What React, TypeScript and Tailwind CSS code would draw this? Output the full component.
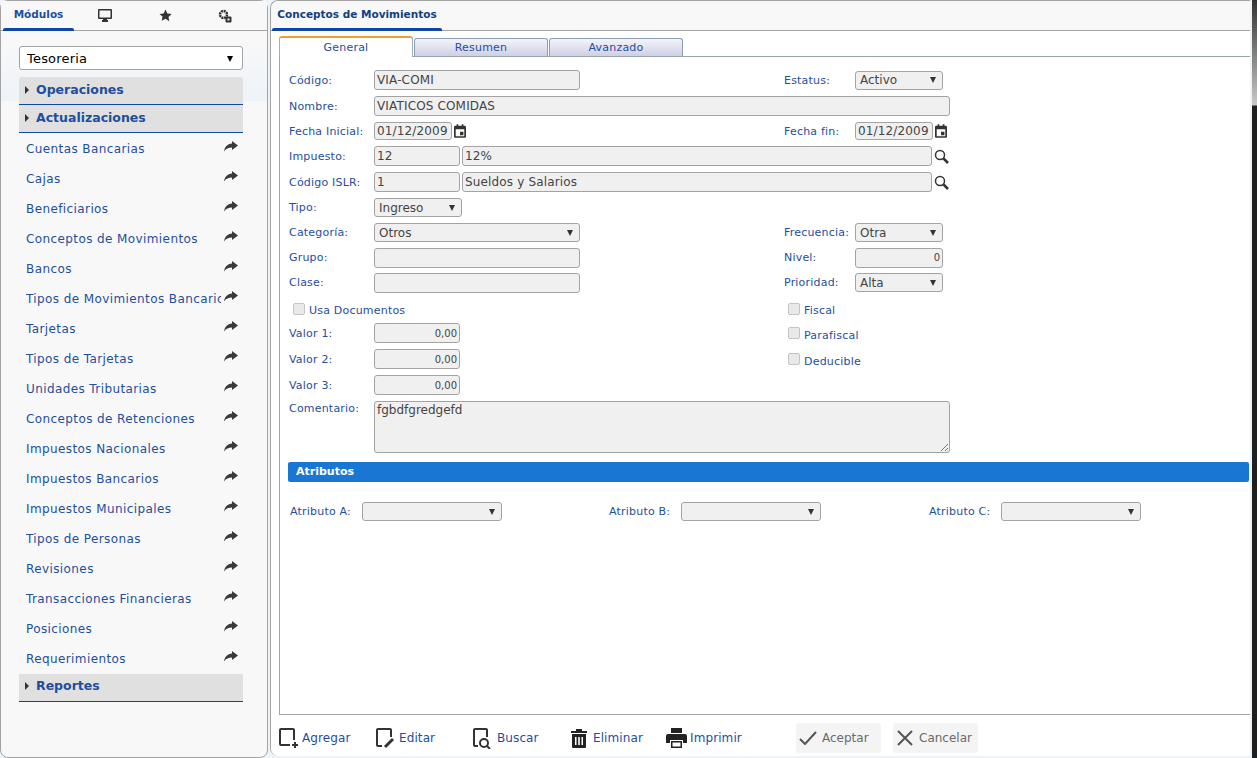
import type { ReactNode } from "react"

const labelColor = "text-[#1f4e9c]"

const menuItems = [
  "Cuentas Bancarias",
  "Cajas",
  "Beneficiarios",
  "Conceptos de Movimientos",
  "Bancos",
  "Tipos de Movimientos Bancarios",
  "Tarjetas",
  "Tipos de Tarjetas",
  "Unidades Tributarias",
  "Conceptos de Retenciones",
  "Impuestos Nacionales",
  "Impuestos Bancarios",
  "Impuestos Municipales",
  "Tipos de Personas",
  "Revisiones",
  "Transacciones Financieras",
  "Posiciones",
  "Requerimientos",
]

function ShareIcon() {
  return (
    <svg width="14" height="11" viewBox="0 0 14 11" className="shrink-0 fill-[#3a3a3a]">
      <path d="M8 0l6 4.500-6 4.500V6.500C4.500 6.500 2 7.500 0 10.500c.5-4.500 3.500-7.500 8-8z" />
    </svg>
  )
}

function CalendarIcon() {
  return (
    <svg width="12" height="14" viewBox="0 0 14 16" className="shrink-0 fill-[#333]">
      <path d="M3 0h2v2h4V0h2v2h1.500C13.300 2 14 2.700 14 3.500v11c0 .8-.7 1.500-1.500 1.500h-11C.7 16 0 15.300 0 14.500v-11C0 2.700.7 2 1.500 2H3zM2 6v8h10V6zm5 3h4v4H7z" />
    </svg>
  )
}

function SearchIcon() {
  return (
    <svg width="15" height="15" viewBox="0 0 15 15" fill="none" className="shrink-0 stroke-[#333]">
      <circle cx="6" cy="6" r="4.500" strokeWidth="1.500" />
      <path d="M9.500 9.500L14 14" strokeWidth="2.500" />
    </svg>
  )
}

function Caret({ className = "border-t-[#333]" }: { className?: string }) {
  return <span className={`h-0 w-0 border-x-[3.500px] border-t-[6px] border-x-transparent ${className}`} />
}

function RowCaret() {
  return <span className="h-0 w-0 border-y-[4px] border-l-[4px] border-y-transparent border-l-[#333]" />
}

function Field({ w, children, right, h = "h-[20px]" }: { w: string; children?: ReactNode; right?: boolean; h?: string }) {
  return (
    <div
      className={`${w} ${h} flex shrink-0 items-center overflow-hidden whitespace-nowrap rounded-[3px] border border-[#a3a3a3] bg-[#f0f0f0] px-[2px] text-[#444] ${right ? "justify-end text-[10px]" : "text-[12px] tracking-[0.15px]"}`}
    >
      {children}
    </div>
  )
}

function Select({ w, value }: { w: string; value?: string }) {
  return (
    <div className={`${w} flex h-[19px] shrink-0 items-center justify-between rounded-[3px] border border-[#a3a3a3] bg-[#f0f0f0] pl-[4px] pr-[6px] text-[12px] text-[#444]`}>
      <span>{value}</span>
      <Caret />
    </div>
  )
}

function Label({ children, w = "w-[85px]" }: { children: ReactNode; w?: string }) {
  return <div className={`${w} mt-[2px] shrink-0 whitespace-nowrap text-[11px] tracking-[0.2px] ${labelColor}`}>{children}</div>
}

function Row({ children, className = "" }: { children: ReactNode; className?: string }) {
  return <div className={`flex items-center ${className}`}>{children}</div>
}

function LeftCol({ children, className = "" }: { children?: ReactNode; className?: string }) {
  return <div className={`flex w-[495px] shrink-0 items-center ${className}`}>{children}</div>
}

function Check({ label }: { label: string }) {
  return (
    <div className="flex items-center">
      <span className="mb-[4px] h-[12px] w-[12px] rounded-[2px] border border-[#c4c4c4] bg-[#e9e9e9]" />
      <span className={`ml-[4px] mt-[2px] text-[11px] tracking-[0.2px] ${labelColor}`}>{label}</span>
    </div>
  )
}

function Sidebar() {
  return (
    <aside className="flex w-[268px] shrink-0 flex-col rounded-[8px] border border-[#a3a3a3] bg-[linear-gradient(#f8f8f8_40px,#eef3f8_100px,#f8f8f8_100px)]">
      <div className="flex h-[30px] border-b border-[#a3a3a3] bg-[#f8f8f8]">
        <div className="relative ml-[2px] flex w-[71px] items-center justify-center pb-[2px] text-[10.500px] font-bold text-[#1f4e9c]">
          Módulos
          <span className="absolute bottom-[-1px] left-0 h-[3px] w-full rounded-t-[2px] bg-[#0d47a1]" />
        </div>
        <div className="flex w-[61px] items-center justify-center">
          <svg width="14" height="13" viewBox="0 0 14 13" className="fill-[#333]">
            <path d="M1 0h12a1 1 0 011 1v8a1 1 0 01-1 1H9v1h1v2H4v-2h1v-1H1a1 1 0 01-1-1V1a1 1 0 011-1zm.500 1.500v7h11v-7z" />
          </svg>
        </div>
        <div className="flex w-[60px] items-center justify-center">
          <svg width="13" height="13" viewBox="0 0 24 24" className="fill-[#333]">
            <path d="M12 1l3.400 7.300 7.900 1-5.800 5.400 1.500 7.900L12 17.800l-7 3.800 1.500-7.900L.7 9.300l7.900-1z" />
          </svg>
        </div>
        <div className="flex w-[60px] items-center justify-center">
          <svg width="14" height="14" viewBox="0 0 14 14" className="fill-[#333]">
            <circle cx="5.500" cy="5.500" r="3.500" fill="none" stroke="#333" strokeWidth="2.500" strokeDasharray="2 .7" />
            <rect x="7.500" y="7.500" width="6" height="6" rx="1" />
            <rect x="9.500" y="9.500" width="2" height="2" fill="#f8f8f8" />
          </svg>
        </div>
      </div>
      <div className="ml-[18px] mr-[24px] mt-[15px] flex flex-col">
        <div className="flex h-[24px] items-center justify-between rounded-[3px] border border-[#a3a3a3] bg-white pl-[7px] pr-[9px] pt-[1px] text-[13px] tracking-[0.2px] text-black">
          <span>Tesoreria</span>
          <Caret className="border-t-black" />
        </div>
        <div className="mt-[7px] flex h-[28px] items-center rounded-t-[3px] border-b border-[#0d47a1] bg-[#e0e0e0] pb-[1px] pl-[6px]">
          <RowCaret />
          <span className="ml-[7px] text-[12.500px] font-bold text-[#1f4e9c]">Operaciones</span>
        </div>
        <div className="flex h-[28px] items-center border-b border-[#0d47a1] bg-[#e0e0e0] pb-[1px] pl-[6px]">
          <RowCaret />
          <span className="ml-[7px] text-[12.500px] font-bold text-[#1f4e9c]">Actualizaciones</span>
        </div>
        <div className="pt-[1px]">
          {menuItems.map((item) => (
            <div key={item} className="flex h-[30px] items-center pl-[7px] pr-[5px]">
              <span className={`min-w-0 flex-1 overflow-hidden whitespace-nowrap text-[12px] tracking-[0.4px] ${labelColor}`}>{item}</span>
              <span className="mb-[5px] ml-[3px]"><ShareIcon /></span>
            </div>
          ))}
        </div>
        <div className="flex h-[28px] items-center border-b border-[#0d47a1] bg-[#e0e0e0] pb-[3px] pl-[6px]">
          <RowCaret />
          <span className="ml-[7px] text-[12.500px] font-bold text-[#1f4e9c]">Reportes</span>
        </div>
      </div>
    </aside>
  )
}

function Form() {
  return (
    <div className="flex flex-col pl-[9px] pt-[10px]">
      <Row className="h-[26px]">
        <LeftCol>
          <Label>Código:</Label>
          <Field w="w-[206px]">VIA-COMI</Field>
        </LeftCol>
        <Label w="w-[71px]">Estatus:</Label>
        <Select w="w-[88px]" value="Activo" />
      </Row>
      <Row className="h-[26px]">
        <Label>Nombre:</Label>
        <Field w="w-[576px]">VIATICOS COMIDAS</Field>
      </Row>
      <Row className="h-[24px]">
        <LeftCol>
          <Label>Fecha Inicial:</Label>
          <Field w="w-[78px]" h="h-[18px]">01/12/2009</Field>
          <span className="ml-[2px]"><CalendarIcon /></span>
        </LeftCol>
        <Label w="w-[71px]">Fecha fin:</Label>
        <Field w="w-[78px]" h="h-[18px]">01/12/2009</Field>
        <span className="ml-[2px]"><CalendarIcon /></span>
      </Row>
      <Row className="h-[26px]">
        <Label>Impuesto:</Label>
        <Field w="w-[86px]">12</Field>
        <div className="ml-[2px]"><Field w="w-[470px]">12%</Field></div>
        <span className="ml-[2px]"><SearchIcon /></span>
      </Row>
      <Row className="h-[26px]">
        <Label>Código ISLR:</Label>
        <Field w="w-[86px]">1</Field>
        <div className="ml-[2px]"><Field w="w-[470px]">Sueldos y Salarios</Field></div>
        <span className="ml-[2px]"><SearchIcon /></span>
      </Row>
      <Row className="h-[25px]">
        <Label>Tipo:</Label>
        <Select w="w-[88px]" value="Ingreso" />
      </Row>
      <Row className="h-[25px]">
        <LeftCol>
          <Label>Categoría:</Label>
          <Select w="w-[206px]" value="Otros" />
        </LeftCol>
        <Label w="w-[71px]">Frecuencia:</Label>
        <Select w="w-[88px]" value="Otra" />
      </Row>
      <Row className="h-[25px]">
        <LeftCol>
          <Label>Grupo:</Label>
          <Field w="w-[206px]" />
        </LeftCol>
        <Label w="w-[71px]">Nivel:</Label>
        <Field w="w-[88px]" right>0</Field>
      </Row>
      <Row className="h-[25px]">
        <LeftCol>
          <Label>Clase:</Label>
          <Field w="w-[206px]" />
        </LeftCol>
        <Label w="w-[71px]">Prioridad:</Label>
        <Select w="w-[88px]" value="Alta" />
      </Row>
      <Row className="h-[25px] pt-[6px]">
        <LeftCol className="pl-[4px]">
          <Check label="Usa Documentos" />
        </LeftCol>
        <div className="pl-[4px]"><Check label="Fiscal" /></div>
      </Row>
      <Row className="h-[26px]">
        <LeftCol>
          <Label>Valor 1:</Label>
          <Field w="w-[86px]" right>0,00</Field>
        </LeftCol>
        <div className="pl-[4px] pt-[4px]"><Check label="Parafiscal" /></div>
      </Row>
      <Row className="h-[26px]">
        <LeftCol>
          <Label>Valor 2:</Label>
          <Field w="w-[86px]" right>0,00</Field>
        </LeftCol>
        <div className="pl-[4px] pt-[4px]"><Check label="Deducible" /></div>
      </Row>
      <Row className="h-[26px]">
        <Label>Valor 3:</Label>
        <Field w="w-[86px]" right>0,00</Field>
      </Row>
      <div className="mt-[3px] flex h-[52px] items-start">
        <div className="-mt-[2px]"><Label>Comentario:</Label></div>
        <div className="relative h-[52px] w-[576px] rounded-[3px] border border-[#a3a3a3] bg-[#f0f0f0] px-[2px] text-[12px] leading-[16px] text-[#444]">
          fgbdfgredgefd
          <svg width="8" height="8" viewBox="0 0 8 8" fill="none" stroke="#777" className="absolute bottom-[1px] right-[1px]">
            <path d="M1 8l7-7M5 8l3-3" />
          </svg>
        </div>
      </div>
    </div>
  )
}

function ActionButton({ icon, label, className = "" }: { icon: ReactNode; label: string; className?: string }) {
  return (
    <div className={`flex h-[30px] items-center ${className}`}>
      {icon}
      <span className={`text-[12px] tracking-[0.1px] ${labelColor}`}>{label}</span>
    </div>
  )
}

function Footer() {
  return (
    <div className="flex h-[41px] shrink-0 items-start bg-white pl-[8px] pt-[8px]">
      <ActionButton
        className="w-[97px]"
        label="Agregar"
        icon={
          <svg width="22" height="22" viewBox="1 0 22 22" fill="none" stroke="#333" strokeWidth="2" className="mr-[1px]">
            <path d="M12 18H3a1 1 0 01-1-1V3a1 1 0 011-1h12a1 1 0 011 1v10" />
            <path d="M17 15v6M14 18h6" />
          </svg>
        }
      />
      <ActionButton
        className="w-[97px]"
        label="Editar"
        icon={
          <svg width="21" height="22" viewBox="1 0 21 22" fill="none" stroke="#333" strokeWidth="2" className="mr-[2px]">
            <path d="M7 19H3a1 1 0 01-1-1V3a1 1 0 011-1h12a1 1 0 011 1v7" />
            <path d="M10 20l8-8" strokeWidth="3" />
          </svg>
        }
      />
      <ActionButton
        className="w-[98px]"
        label="Buscar"
        icon={
          <svg width="21" height="22" viewBox="1 0 21 22" fill="none" stroke="#333" strokeWidth="2" className="mr-[3px]">
            <path d="M6 19H3a1 1 0 01-1-1V3a1 1 0 011-1h11a1 1 0 011 1v7" />
            <circle cx="12" cy="16" r="4" />
            <path d="M15 19l3 3" />
          </svg>
        }
      />
      <ActionButton
        className="w-[95px]"
        label="Eliminar"
        icon={
          <svg width="20" height="20" viewBox="2 0 20 20" className="mr-[2px] fill-[#222]">
            <path d="M7 1h6v2h5v2H2V3h5zM3 6h14v13a1 1 0 01-1 1H4a1 1 0 01-1-1zm3 3v8h1.500V9zm3.200 0v8h1.600V9zm3.300 0v8H14V9z" />
          </svg>
        }
      />
      <ActionButton
        className="w-[130px]"
        label="Imprimir"
        icon={
          <svg width="21" height="20" viewBox="0 0 21 20" className="mr-[3px] fill-[#222]">
            <path d="M5 0h11v5H5zM2 6h17a2 2 0 012 2v7h-4v-3H4v3H0V8a2 2 0 012-2zM5 13h11v7H5zm1.500 1.500V18.500h8v-4z" />
          </svg>
        }
      />
      <div className="flex h-[30px] w-[85px] items-center rounded-[3px] bg-[#f4f4f4] pl-[3px] text-[12px] text-[#6a6a6a]">
        <svg width="18" height="14" viewBox="0 0 18 14" fill="none" stroke="#555" strokeWidth="2" className="mr-[5px]">
          <path d="M1 8l5 5L17 1" />
        </svg>
        Aceptar
      </div>
      <div className="ml-[12px] flex h-[30px] w-[85px] items-center rounded-[3px] bg-[#f4f4f4] pl-[4px] text-[12px] text-[#6a6a6a]">
        <svg width="16" height="16" viewBox="0 0 16 16" fill="none" stroke="#555" strokeWidth="2" className="mr-[6px]">
          <path d="M1 1l14 14M15 1L1 15" />
        </svg>
        Cancelar
      </div>
    </div>
  )
}

function Main() {
  return (
    <main className="mb-[2px] flex min-w-0 flex-1 flex-col overflow-hidden rounded-l-[8px] border-l border-t border-[#a3a3a3]">
      <div className="flex h-[30px] shrink-0 border-b border-[#a3a3a3] bg-[#f8f8f8]">
        <div className="relative ml-[1px] flex w-[170px] items-center justify-center pb-[1px] text-[10.500px] font-bold text-[#123f80]">
          Conceptos de Movimientos
          <span className="absolute bottom-[-1px] left-0 h-[3px] w-full rounded-t-[2px] bg-[#0d47a1]" />
        </div>
      </div>
      <div className="flex min-h-0 flex-1 flex-col bg-white pl-[8px]">
        <div className="flex h-[25px] shrink-0 items-end">
          <div className="relative z-10 -mb-px flex h-[21px] w-[134px] items-center justify-center rounded-t-[3px] border-x border-t-[2px] border-x-[#a3adb5] border-t-[#f0a030] bg-white pt-[1px] text-[11px] tracking-[0.2px] text-[#1f4e9c]">
            General
          </div>
          <div className="ml-[1px] flex h-[18px] w-[134px] items-center justify-center rounded-t-[3px] border border-b-0 border-[#8aa0b0] bg-gradient-to-b from-[#f4f4fa] to-[#cfcfe6] pt-[1px] text-[11px] tracking-[0.2px] text-[#1f4e9c]">
            Resumen
          </div>
          <div className="ml-[1px] flex h-[18px] w-[134px] items-center justify-center rounded-t-[3px] border border-b-0 border-[#8aa0b0] bg-gradient-to-b from-[#f4f4fa] to-[#cfcfe6] pt-[1px] text-[11px] tracking-[0.2px] text-[#1f4e9c]">
            Avanzado
          </div>
        </div>
        <div className="flex min-h-0 flex-1 flex-col border-b border-l border-t border-b-[#a3a3a3] border-l-[#a3a3a3] border-t-[#9aa5a5]">
          <Form />
          <div className="ml-[8px] mr-[1px] mt-[9px] flex h-[20px] shrink-0 items-center rounded-[2px] bg-[#1976d2] pl-[8px] text-[11px] font-bold text-white">
            Atributos
          </div>
          <div className="flex items-center pl-[10px] pt-[20px]">
            <Label w="w-[72px]">Atributo A:</Label>
            <Select w="w-[140px]" />
            <div className="ml-[107px]"><Label w="w-[72px]">Atributo B:</Label></div>
            <Select w="w-[140px]" />
            <div className="ml-[108px]"><Label w="w-[72px]">Atributo C:</Label></div>
            <Select w="w-[140px]" />
          </div>
        </div>
      </div>
      <Footer />
    </main>
  )
}

export default function App() {
  return (
    <div className="flex h-[758px] w-[1257px] gap-[2px] overflow-hidden bg-[#eef3f8] [font-family:DejaVu_Sans,sans-serif]">
      <Sidebar />
      <Main />
      <div className="w-[5px] shrink-0 bg-[linear-gradient(#333_0px,#c8c8c8_105px,#1f1f1f_106px)]" />
    </div>
  )
}
